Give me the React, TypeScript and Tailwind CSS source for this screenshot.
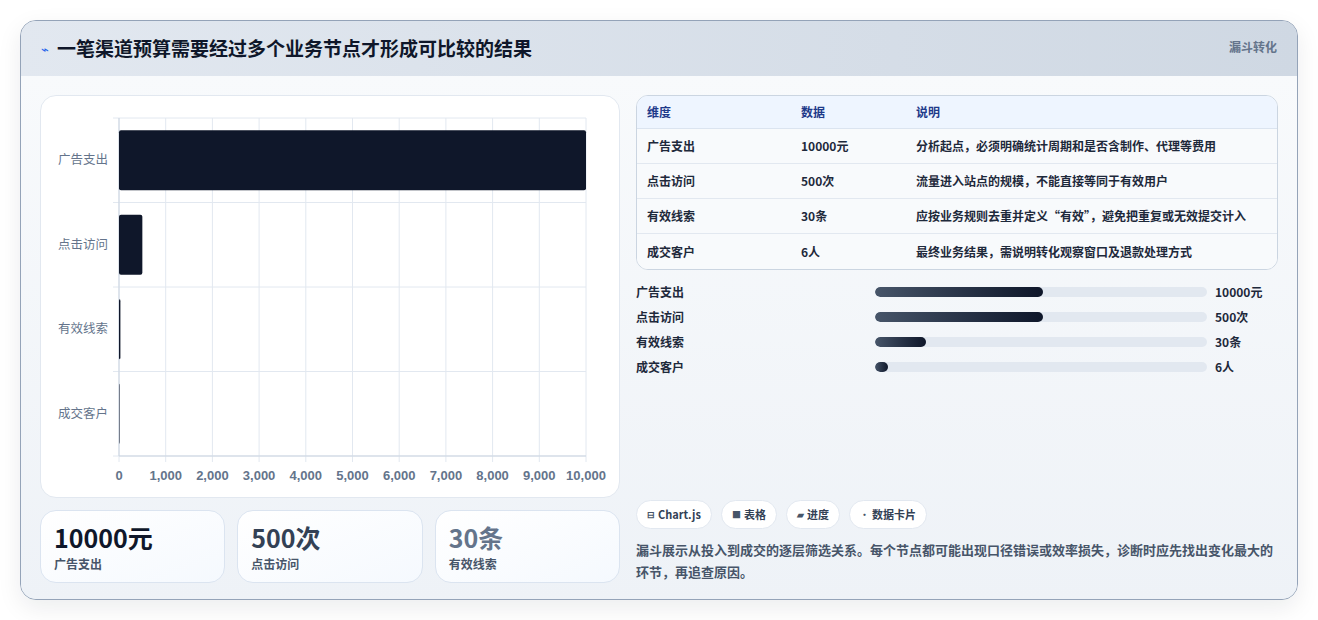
const font = { fontFamily: '"Noto Sans CJK SC", "Noto Sans", sans-serif' };

const rows = [
  { k: "广告支出", v: "10000元", d: "分析起点，必须明确统计周期和是否含制作、代理等费用", n: 10000, p: 50.6 },
  { k: "点击访问", v: "500次", d: "流量进入站点的规模，不能直接等同于有效用户", n: 500, p: 50.6 },
  { k: "有效线索", v: "30条", d: "应按业务规则去重并定义“有效”，避免把重复或无效提交计入", n: 30, p: 15.4 },
  { k: "成交客户", v: "6人", d: "最终业务结果，需说明转化观察窗口及退款处理方式", n: 6, p: 4 },
];

function Chart() {
  const x0 = 78, x1 = 545, y0 = 22, y1 = 360;
  const band = (y1 - y0) / 4;
  const ticks = Array.from({ length: 11 }, (_, i) => i * 1000);
  return (
    <svg width="580" height="400" className="block" style={font}>
      {ticks.map((t) => {
        const x = x0 + ((x1 - x0) * t) / 10000;
        return (
          <g key={t}>
            <line x1={x} x2={x} y1={y0} y2={y1 + 6} stroke="#e2e8f0" />
            <text x={x} y={384} textAnchor="middle" fontSize="13" fill="#64748b" fontWeight="600" fontFamily="Liberation Sans, sans-serif">
              {t.toLocaleString("en-US")}
            </text>
          </g>
        );
      })}
      {[0, 1, 2, 3, 4].map((i) => (
        <line key={i} x1={x0 - 6} x2={x1} y1={y0 + band * i} y2={y0 + band * i} stroke="#e2e8f0" />
      ))}
      <line x1={x0} x2={x0} y1={y0} y2={y1} stroke="#cbd5e1" />
      <line x1={x0} x2={x1} y1={y1} y2={y1} stroke="#cbd5e1" />
      {rows.map((r, i) => {
        const cy = y0 + band * i + band / 2;
        const w = Math.max(((x1 - x0) * r.n) / 10000, 0.5);
        return (
          <g key={r.k}>
            <text x={67} y={cy + 4} textAnchor="end" fontSize="12.5" fill="#64748b">{r.k}</text>
            <rect x={x0} y={cy - 30} width={w} height={60} rx="2" fill="#0f172a" />
          </g>
        );
      })}
    </svg>
  );
}

export default function App() {
  return (
    <div className="w-[1318px] h-[620px] bg-white pt-[20px] px-[20px]" style={font}>
      <div className="w-[1278px] h-[580px] rounded-2xl border border-[#94a3b8] bg-[#f1f5f9] overflow-hidden flex flex-col shadow-[0_8px_24px_rgba(15,23,42,0.08)]">
        <div className="h-[55px] shrink-0 flex items-center justify-between px-[20px] bg-gradient-to-r from-[#e2e8f0] to-[#cfd8e3]">
          <div className="flex items-center gap-2">
            <span className="text-[#2563eb] text-[13px]">⌁</span>
            <h1 className="text-[19px] font-bold text-[#0f172a]">一笔渠道预算需要经过多个业务节点才形成可比较的结果</h1>
          </div>
          <span className="text-[12px] font-bold text-[#64748b] self-start mt-[17px]">漏斗转化</span>
        </div>
        <div className="flex-1 flex gap-[16px] p-[19px] pb-[18px] bg-gradient-to-b from-[#f8fafc] to-[#eef2f7]">
          <div className="w-[580px] flex flex-col gap-[12px]">
            <div className="h-[403px] rounded-2xl bg-white border border-[#e2e8f0]">
              <Chart />
            </div>
            <div className="grid grid-cols-3 gap-[12px] h-[73px]">
              {[
                ["10000元", "广告支出", "text-[#0f172a]"],
                ["500次", "点击访问", "text-[#334155]"],
                ["30条", "有效线索", "text-[#64748b]"],
              ].map(([v, k, c]) => (
                <div key={k} className="rounded-2xl border border-[#dbe4f0] bg-gradient-to-br from-white to-[#f5f9fe] px-[13px] pt-[10px]">
                  <div className={`text-[25px] font-bold leading-[32px] ${c}`}>{v}</div>
                  <div className="text-[12px] font-bold text-[#475569] mt-[2px]">{k}</div>
                </div>
              ))}
            </div>
          </div>
          <div className="flex-1 flex flex-col">
            <div className="rounded-xl border border-[#cbd5e1] overflow-hidden bg-white">
              <div className="grid grid-cols-[154px_115px_1fr] h-[33px] items-center px-[10px] bg-[#eef5ff] text-[12px] font-bold text-[#1e3a8a] border-b border-[#dbe4f0]">
                <span>维度</span><span>数据</span><span>说明</span>
              </div>
              {rows.map((r, i) => (
                <div key={r.k} className={`grid grid-cols-[154px_115px_1fr] h-[35px] items-center px-[10px] text-[12px] font-semibold text-[#1e293b] bg-[#f8fafc] ${i < 3 ? "border-b border-[#e2e8f0]" : ""}`}>
                  <span>{r.k}</span><span>{r.v}</span><span>{r.d}</span>
                </div>
              ))}
            </div>
            <div className="mt-[12px] flex flex-col gap-[6px]">
              {rows.map((r) => (
                <div key={r.k} className="flex items-center h-[19px] text-[12px] font-bold text-[#1e293b]">
                  <span className="w-[239px]">{r.k}</span>
                  <div className="w-[332px] h-[10px] rounded-full bg-[#e2e8f0] overflow-hidden">
                    <div className="h-full rounded-full bg-gradient-to-r from-[#475569] to-[#0f172a]" style={{ width: `${r.p}%` }} />
                  </div>
                  <span className="ml-[8px]">{r.v}</span>
                </div>
              ))}
            </div>
            <div className="mt-auto">
              <div className="flex gap-[9px] mb-[10px]">
                {[["⊟", "Chart.js"], ["■", "表格"], ["▰", "进度"], ["•", "数据卡片"]].map(([ic, t]) => (
                  <span key={t} className="h-[29px] px-[10px] rounded-full bg-white border border-[#e2e8f0] flex items-center gap-[3px] text-[11px] font-bold text-[#334155]">
                    <span className="text-[9px] text-[#475569]">{ic}</span>{t}
                  </span>
                ))}
              </div>
              <p className="text-[13px] leading-[22px] font-semibold text-[#475569]">
                漏斗展示从投入到成交的逐层筛选关系。每个节点都可能出现口径错误或效率损失，诊断时应先找出变化最大的环节，再追查原因。
              </p>
            </div>
          </div>
        </div>
      </div>
    </div>
  );
}
